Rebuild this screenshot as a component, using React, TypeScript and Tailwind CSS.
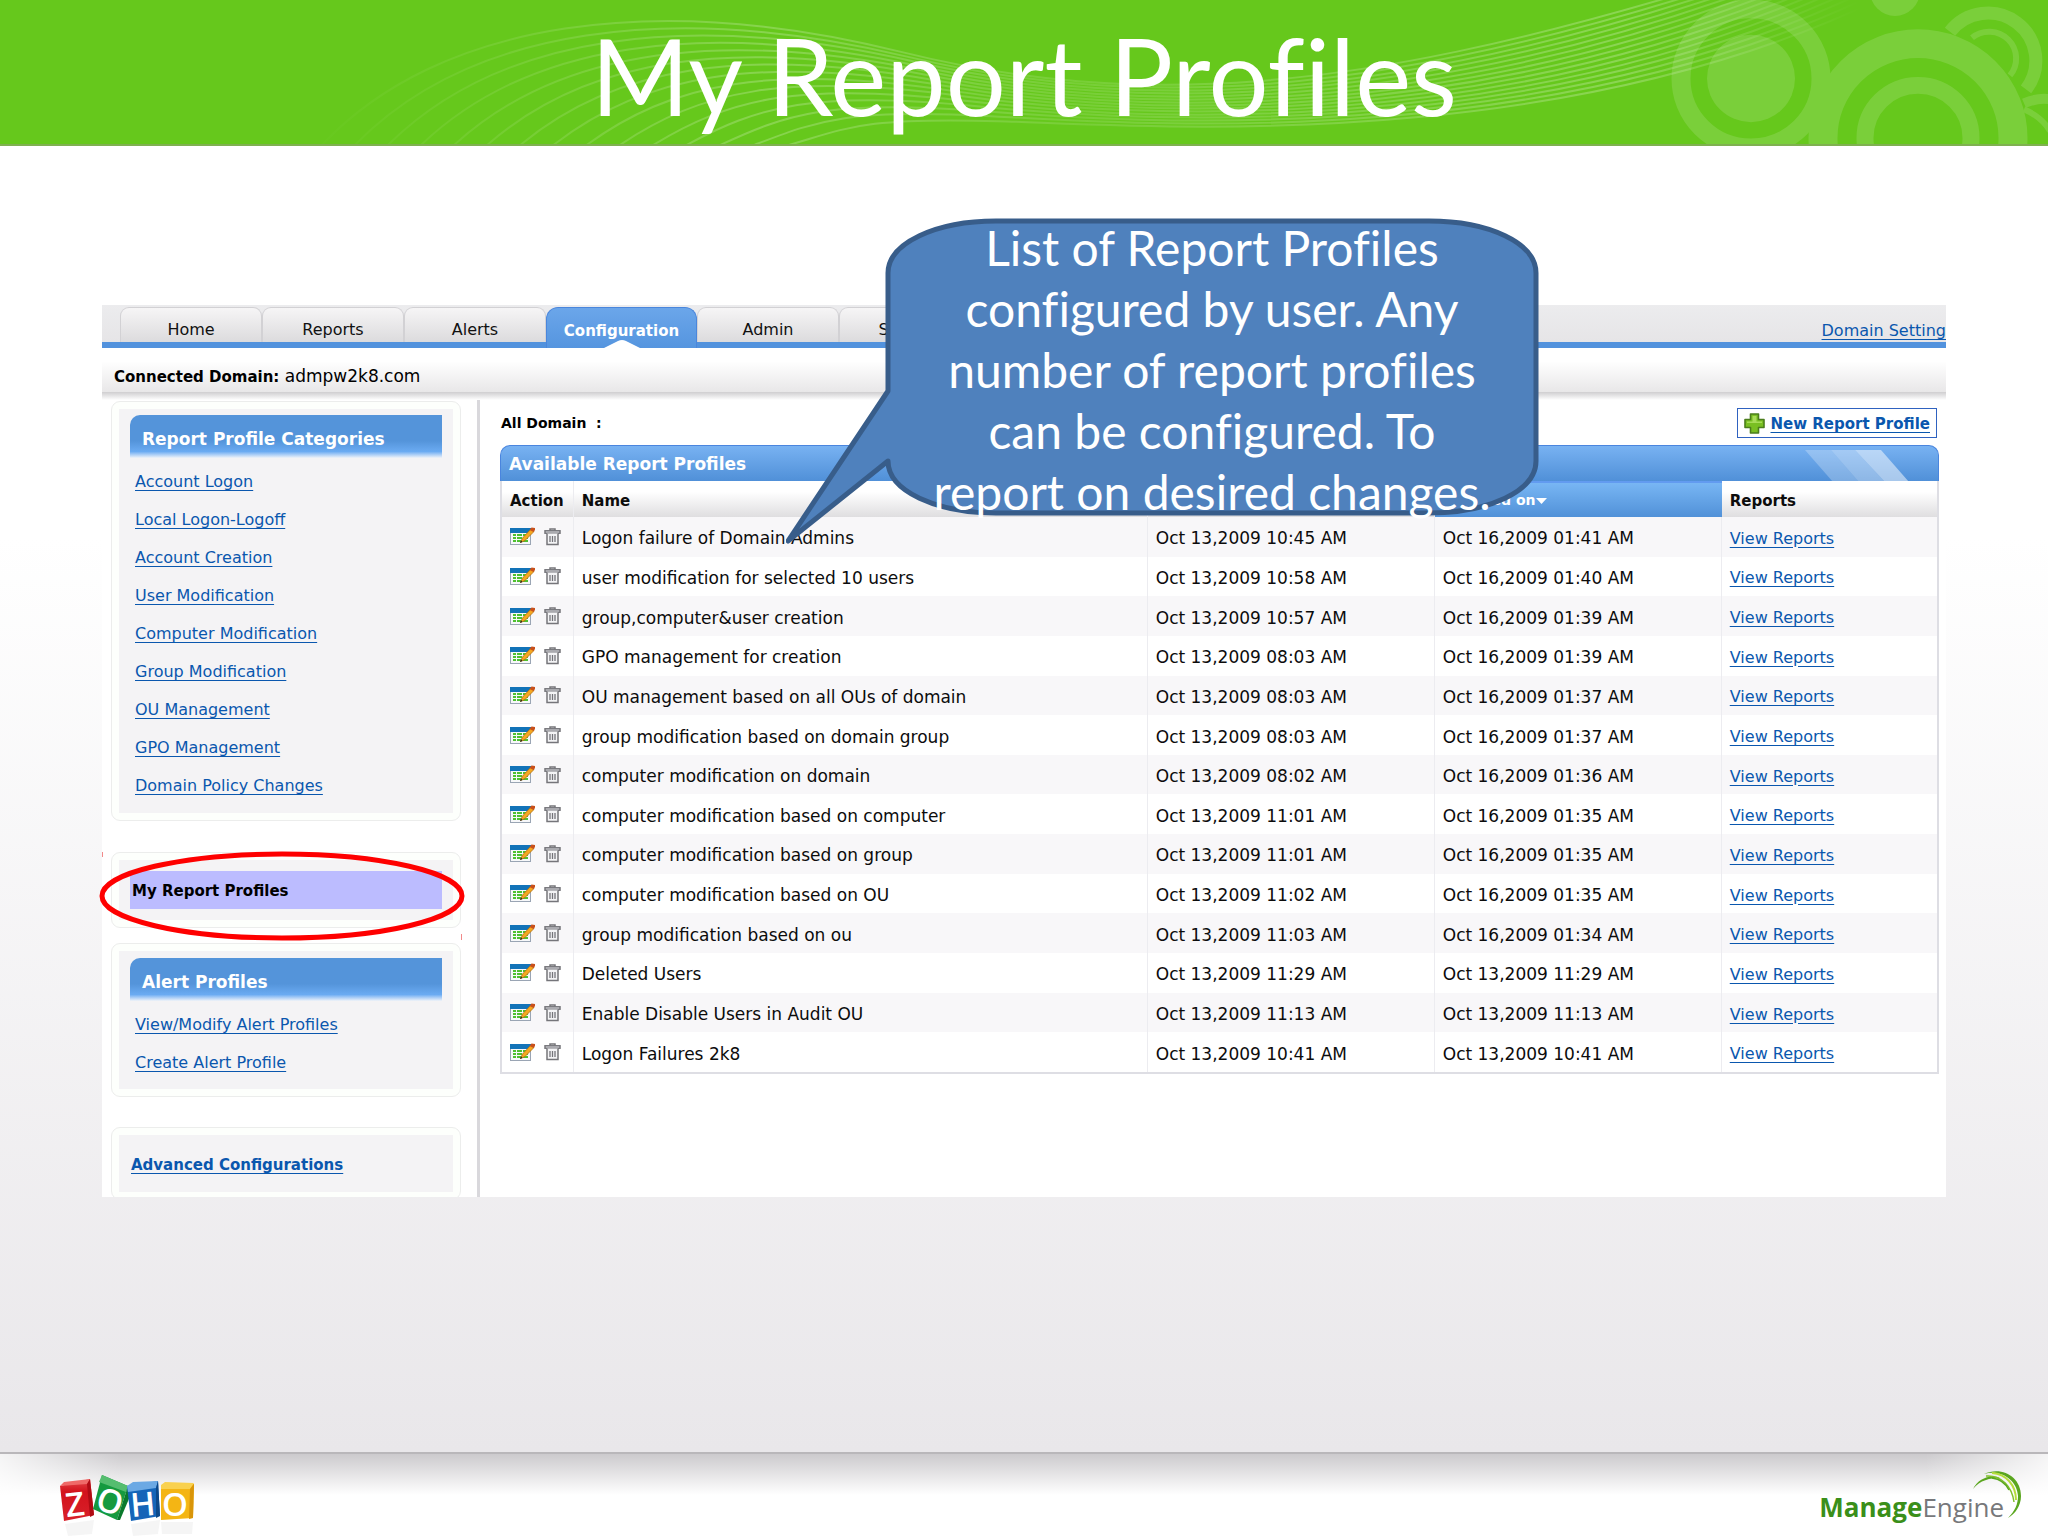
import React from "react";

const CATEGORY_LINKS = [
  "Account Logon", "Local Logon-Logoff", "Account Creation", "User Modification", "Computer Modification",
  "Group Modification", "OU Management", "GPO Management", "Domain Policy Changes",
];

const ROWS: [string, string, string][] = [
  ["Logon failure of Domain Admins", "Oct 13,2009 10:45 AM", "Oct 16,2009 01:41 AM"],
  ["user modification for selected 10 users", "Oct 13,2009 10:58 AM", "Oct 16,2009 01:40 AM"],
  ["group,computer&user creation", "Oct 13,2009 10:57 AM", "Oct 16,2009 01:39 AM"],
  ["GPO management for creation", "Oct 13,2009 08:03 AM", "Oct 16,2009 01:39 AM"],
  ["OU management based on all OUs of domain", "Oct 13,2009 08:03 AM", "Oct 16,2009 01:37 AM"],
  ["group modification based on domain group", "Oct 13,2009 08:03 AM", "Oct 16,2009 01:37 AM"],
  ["computer modification on domain", "Oct 13,2009 08:02 AM", "Oct 16,2009 01:36 AM"],
  ["computer modification based on computer", "Oct 13,2009 11:01 AM", "Oct 16,2009 01:35 AM"],
  ["computer modification based on group", "Oct 13,2009 11:01 AM", "Oct 16,2009 01:35 AM"],
  ["computer modification based on OU", "Oct 13,2009 11:02 AM", "Oct 16,2009 01:35 AM"],
  ["group modification based on ou", "Oct 13,2009 11:03 AM", "Oct 16,2009 01:34 AM"],
  ["Deleted Users", "Oct 13,2009 11:29 AM", "Oct 13,2009 11:29 AM"],
  ["Enable Disable Users in Audit OU", "Oct 13,2009 11:13 AM", "Oct 13,2009 11:13 AM"],
  ["Logon Failures 2k8", "Oct 13,2009 10:41 AM", "Oct 13,2009 10:41 AM"],
];

const LINES = Array.from({ length: 15 }, (_, i) => i);

function HeaderArt() {
  return (
    <svg className="absolute inset-0 h-full w-full" viewBox="0 0 2048 145" preserveAspectRatio="none" aria-hidden="true">
      <defs>
        <linearGradient id="wave" x1="300" y1="0" x2="1860" y2="0" gradientUnits="userSpaceOnUse">
          <stop offset="0" stopColor="#fff" stopOpacity="0" />
          <stop offset="0.3" stopColor="#fff" stopOpacity="0.22" />
          <stop offset="0.5" stopColor="#fff" stopOpacity="0.12" />
          <stop offset="0.85" stopColor="#fff" stopOpacity="0.24" />
          <stop offset="1" stopColor="#fff" stopOpacity="0" />
        </linearGradient>
      </defs>
      <g fill="none" stroke="url(#wave)" strokeWidth="2">
        {LINES.map((i) => (
          <path
            key={i}
            d={`M${320 + i * 33} 148 C${440 + i * 29} ${18 + i * 8}, ${660 + i * 14} ${-8 + i * 9}, ${900 + i * 7} ${52 + i * 5} S${1360 + i * 14} ${90 + i * 5}, ${1680 + i * 15} -6`}
          />
        ))}
      </g>
      <g opacity="0.13" fill="none" stroke="#fff">
        <circle cx="1751" cy="79" r="70" strokeWidth="19" />
        <circle cx="1751" cy="79" r="44" fill="#fff" stroke="none" />
        <circle cx="1895" cy="-9" r="25" fill="#fff" stroke="none" />
        <circle cx="1918" cy="139" r="95" strokeWidth="29" />
        <circle cx="1918" cy="139" r="53" strokeWidth="17" />
        <path d="M1950 32 A47 47 0 1 1 2026 90" strokeWidth="13" />
        <path d="M1972 38 A27 27 0 0 1 2010 76" strokeWidth="6" />
        <path d="M2024 104 Q2038 98 2050 100" strokeWidth="10" />
        <path d="M2024 110 Q2042 118 2050 132" strokeWidth="6" />
      </g>
    </svg>
  );
}

function EditIcon() {
  return (
    <svg className="block" width="25" height="19" viewBox="0 0 25 19" aria-hidden="true">
      <rect x="0.5" y="1.5" width="20" height="16" fill="#f7f8fa" stroke="#9aa5b4" />
      <rect x="0" y="1" width="21" height="5" fill="#1273b8" />
      <g fill="#4fc030">
        <rect x="3" y="7" width="3" height="2" /><rect x="7" y="7" width="5" height="2" /><rect x="13" y="7" width="5" height="2" />
        <rect x="3" y="10" width="3" height="2" /><rect x="7" y="10" width="5" height="2" /><rect x="13" y="10" width="5" height="2" />
        <rect x="3" y="13" width="3" height="2" /><rect x="7" y="13" width="5" height="2" /><rect x="13" y="13" width="5" height="2" />
      </g>
      <path d="M10.500 15.500 L12.500 11 L21 2 L24 4.500 L15 13.500 Z" fill="#f6a821" stroke="#b06f0c" strokeWidth="0.800" />
      <path d="M19.500 3 L21.500 0.500 L25 1 L25 3 L23.500 5 Z" fill="#c8501b" />
      <path d="M10 16 L11 13.500 L12.500 15 Z" fill="#222" />
    </svg>
  );
}

function TrashIcon() {
  return (
    <svg className="block" width="17" height="18" viewBox="0 0 17 18" fill="none" stroke="#75757a" strokeWidth="1.500" aria-hidden="true">
      <path d="M6 2.500 V1 H11 V2.500" />
      <rect x="1" y="2.800" width="15" height="2.400" fill="#ececef" />
      <path d="M3 5.500 V16.500 H14 V5.500" fill="#f4f4f6" />
      <path d="M6 8 V14 M8.500 8 V14 M11 8 V14" strokeWidth="1.300" />
    </svg>
  );
}

function PlusIcon() {
  return (
    <svg width="21" height="21" viewBox="0 0 21 21" aria-hidden="true">
      <path d="M6.500 1 H14.500 V6.500 H20 V14.500 H14.500 V20 H6.500 V14.500 H1 V6.500 H6.500 Z" fill="#79bf22" stroke="#4b7d1c" strokeWidth="1.600" strokeLinejoin="round" />
      <path d="M8.500 3 H12.500 V8.500 H18 V10 H3 V8.500 H8.500 Z" fill="#a8dc58" />
    </svg>
  );
}

function ZohoLogo() {
  return (
    <svg width="140" height="64" viewBox="0 0 140 64" role="img" aria-label="Zoho">
      <defs>
        <linearGradient id="zr" x1="0" y1="0" x2="0" y2="1"><stop offset="0" stopColor="#e2484b" /><stop offset="0.300" stopColor="#d3131c" /><stop offset="1" stopColor="#d8202a" /></linearGradient>
      </defs>
      <path d="M0 12 L30 5 L34 41 L4 47 Z" fill="url(#zr)" />
      <path d="M0 12 L4 8 L30 5 L27 10 Z" fill="#ef6a68" />
      <path d="M27 10 L30 5 L34 41 L30 43 Z" fill="#b00c14" />
      <path d="M42 1 L68 12 L57 46 L33 35 Z" fill="#159a3f" />
      <path d="M42 1 L68 12 L66 18 L39 8 Z" fill="#55bd6f" />
      <path d="M68 12 L71 20 L60 46 L57 46 Z" fill="#0a7a2c" />
      <path d="M67 12 L98 7 L100 42 L71 47 Z" fill="#1565b8" />
      <path d="M67 12 L73 8 L98 7 L96 14 L68 18 Z" fill="#6ba9e4" />
      <path d="M96 14 L98 7 L100 42 L96 44 Z" fill="#0c4889" />
      <path d="M101 11 L134 10 L133 44 L101 46 Z" fill="#f4b514" />
      <path d="M101 11 L105 8 L134 9 L130 15 L101 15 Z" fill="#f9d14f" />
      <path d="M130 15 L134 10 L133 44 L129 45 Z" fill="#d99509" />
      <g fill="#fff" fontFamily="Open Sans, sans-serif" fontWeight="600" fontSize="33" textAnchor="middle">
        <text x="15" y="42" transform="rotate(-6 15 30)">Z</text>
        <text x="50" y="39" transform="rotate(18 50 27)">O</text>
        <text x="83" y="42" transform="rotate(-5 83 31)">H</text>
        <text x="115" y="42">O</text>
      </g>
      <g fill="#aaa" fillOpacity="0.120">
        <path d="M5 50 L34 46 L32 60 L8 62 Z" /><path d="M71 50 L100 46 L98 60 L73 62 Z" /><path d="M101 48 H133 L132 60 H102 Z" />
      </g>
    </svg>
  );
}

function EngineLogo() {
  return (
    <div className="relative flex h-[52px] items-end pr-[18px] font-['Open_Sans',sans-serif] text-[26px] leading-[38px]" role="img" aria-label="ManageEngine">
      <span className="font-bold text-[#3a8f1a]">Manage</span>
      <span className="text-[#77787b]">Engine</span>
      <svg className="absolute -top-1 right-0" width="50" height="50" viewBox="0 0 50 50" fill="none" aria-hidden="true">
        <path d="M1 19 C6 9 18 4 28 8 C18 8 8 10 1 19 Z" fill="#5aa61f" />
        <path d="M12 4 C30 -4 49 7 49 26 C49 36 43 44 36 48 C43 41 46 34 46 26 C45 9 28 -1 12 4 Z" fill="#5aa61f" />
        <path d="M20 3 C34 4 44 15 44 30" stroke="#b6dc3c" strokeWidth="2" />
        <path d="M14 6 C30 5 40 17 42 32" stroke="#7fbf2a" strokeWidth="1.500" />
        <path d="M20 8 C28 9 34 14 37 20" stroke="#5aa61f" strokeWidth="1.500" />
      </svg>
    </div>
  );
}

function Tab({ children, current }: { children: React.ReactNode; current?: boolean }) {
  if (current)
    return (
      <button className="relative -mb-[6px] h-[41px] w-[151px] rounded-t-[12px] border border-b-0 border-[#4a86dc] bg-linear-to-b from-[#6ba6ea] to-[#5595df] pt-1.5 text-[15px] font-bold text-white">
        {children}
        <svg className="absolute bottom-0 left-[57px]" width="36" height="8" viewBox="0 0 36 8" aria-hidden="true">
          <path d="M0 8 L14 1 Q18 -1 22 1 L36 8 Z" fill="#fff" />
        </svg>
      </button>
    );
  return (
    <button className="h-[35px] w-[142px] rounded-t-[9px] border border-b-0 border-[#d2d1d4] bg-linear-to-b from-[#f6f5f6] to-[#dcdbdd] pt-2.5 text-[16px] text-[#111]">
      {children}
    </button>
  );
}

function Box({ children, className = "" }: { children: React.ReactNode; className?: string }) {
  return (
    <section className={"rounded-[9px] border border-[#ecedec] bg-[#fdfffc] p-[7px] " + className}>
      <div className="h-full bg-[#f4f3f5] px-[11px]">{children}</div>
    </section>
  );
}

function BoxTitle({ children }: { children: React.ReactNode }) {
  return (
    <h2 className="h-[43px] rounded-tl-[10px] bg-linear-to-b from-[#5494da] from-60% via-[#6babf2] via-85% to-[#f0f3f8] pl-3 text-[17px] leading-[48px] font-bold text-white">
      {children}
    </h2>
  );
}

function SideLink({ children }: { children: React.ReactNode }) {
  return (
    <li className="h-[38px] leading-[38px]">
      <a href="#" className="text-[16px] text-[#0a57ae] underline underline-offset-[3px]">{children}</a>
    </li>
  );
}

function Callout() {
  return (
    <div className="absolute top-[-88px] left-[684px] w-[756px]">
      <svg className="block" width="756" height="328" viewBox="0 0 756 328" aria-hidden="true">
        <path
          d="M102 56 C102 26 150 4 210 4 H643 C703 4 750 26 750 56 V244 C750 274 703 296 643 296 H210 C150 296 102 274 102 244 L2 324 L102 174 Z"
          fill="#4f81bd" stroke="#385d8a" strokeWidth="5" strokeLinejoin="round"
        />
      </svg>
      <p className="absolute top-0 left-[102px] w-[648px] text-center font-['Lato',sans-serif] text-[48px] leading-[61px] whitespace-nowrap text-white [font-variant-ligatures:none]">
        List of Report Profiles<br />configured by user. Any<br />number of report profiles<br />can be configured. To<br />report on desired changes.
      </p>
    </div>
  );
}

const CELL = "border-r border-[#ececf0] pl-2 text-left whitespace-nowrap";
const TEXT_CELL = "border-r border-[#ececf0] pt-[3px] pl-2 whitespace-nowrap";

export default function App() {
  return (
    <div className="flex min-h-screen flex-col bg-white font-['DejaVu_Sans',Verdana,sans-serif]">
      <header className="relative flex h-[146px] items-center justify-center overflow-hidden border-b-2 border-[#7fb050] bg-[#66c81c]">
        <HeaderArt />
        <h1 className="relative pt-1.5 font-['Lato',sans-serif] text-[106px] leading-[130px] text-white [font-variant-ligatures:none]">My Report Profiles</h1>
      </header>

      <main className="flex-1 bg-linear-to-b from-white from-30% to-[#e9e7ea] px-[102px] pt-[159px]">
        <div className="relative h-[892px] bg-white">
          <nav className="flex h-[43px] items-end justify-between border-b-[6px] border-[#5292dd] bg-linear-to-b from-[#ececee] to-[#e6e5e7]">
            <div className="flex items-end pl-[18px]">
              <Tab>Home</Tab>
              <Tab>Reports</Tab>
              <Tab>Alerts</Tab>
              <Tab current>Configuration</Tab>
              <Tab>Admin</Tab>
              <Tab>Support</Tab>
            </div>
            <a href="#" className="text-[16px] leading-[22px] text-[#0a57ae] underline underline-offset-[3px]">Domain Setting</a>
          </nav>
          <div className="h-[44px] bg-linear-to-b from-white from-30% to-[#e8e7e8] pl-3 text-[17px] leading-[56px]">
            <b className="text-[15px]">Connected Domain:</b> admpw2k8.com
          </div>
          <div className="h-[8px] bg-linear-to-b from-[#cfced0] to-white" />

          <div className="flex h-[797px] overflow-hidden">
            <aside className="w-[378px] shrink-0 border-r-[3px] border-[#d9d8dc] pt-px pl-[9px]">
              <Box className="mr-[16px] h-[420px]">
                <div className="pt-[6px]"><BoxTitle>Report Profile Categories</BoxTitle></div>
                <ul className="pt-[5px] pl-[5px]">
                  {CATEGORY_LINKS.map((t) => <SideLink key={t}>{t}</SideLink>)}
                </ul>
              </Box>
              <Box className="mt-[31px] mr-[16px] h-[76px]">
                <div className="pt-[11px]"><div className="h-[38px] bg-[#bcbcff] pl-0.5 text-[15px] leading-[40px] font-bold text-black">My Report Profiles</div></div>
              </Box>
              <Box className="mt-[15px] mr-[16px] h-[154px]">
                <div className="pt-[7px]"><BoxTitle>Alert Profiles</BoxTitle></div>
                <ul className="pt-[5px] pl-[5px]">
                  <SideLink>View/Modify Alert Profiles</SideLink>
                  <SideLink>Create Alert Profile</SideLink>
                </ul>
              </Box>
              <Box className="mt-[30px] mr-[16px] h-[73px]">
                <a href="#" className="pl-px text-[15px] leading-[60px] font-bold text-[#0a57ae] underline underline-offset-[3px]">Advanced Configurations</a>
              </Box>
            </aside>

            <section className="min-w-0 flex-1 pr-[7px] pl-[20px]">
              <div className="flex h-[45px] items-center justify-between pt-px">
                <h2 className="pl-px text-[14px] font-bold">All Domain&nbsp; :</h2>
                <button className="mr-0.5 flex h-[30px] items-center gap-1.5 border border-[#2f62c0] bg-white px-1.5 text-[15px] font-bold text-[#0a57ae]">
                  <PlusIcon /><span className="pt-0.5 underline underline-offset-[3px]">New Report Profile</span>
                </button>
              </div>
              <div className="flex h-[36px] justify-between overflow-hidden rounded-t-[10px] border border-b-0 border-[#4a85de] bg-linear-to-b from-[#78b2f2] to-[#5090d8] pl-2">
                <h2 className="text-[17px] leading-[36px] font-bold text-white">Available Report Profiles</h2>
                <svg className="mr-[25px]" width="108" height="36" viewBox="0 0 108 36" aria-hidden="true">
                  <path d="M0 4 H26 L54 36 H28 Z" fill="#fff" fillOpacity="0.250" />
                  <path d="M26 4 H50 L80 36 H54 Z" fill="#fff" fillOpacity="0.350" />
                  <path d="M50 4 H76 L104 36 H80 Z" fill="#fff" fillOpacity="0.500" />
                </svg>
              </div>
              <table className="h-[593px] w-full table-fixed border-separate border-spacing-0 border-2 border-t-0 border-[#dedee4] text-[17px] leading-6 text-[#0c0c0c]">
                <colgroup>
                  <col className="w-[5%]" /><col className="w-[40%]" /><col className="w-[20%]" /><col className="w-[20%]" /><col className="w-[15%]" />
                </colgroup>
                <thead>
                  <tr className="h-[36px] bg-linear-to-b from-white from-30% to-[#dfdee0] text-[15px]">
                    <th className={TEXT_CELL + " text-left"}>Action</th>
                    <th className={TEXT_CELL + " text-left"}>Name</th>
                    <th className={TEXT_CELL + " text-left"}>Created on</th>
                    <th className="border-t-2 border-[#629bf0] bg-linear-to-b from-[#78b6f4] to-[#5191d8] pl-2 text-left text-[14px] text-white">
                      Modified on
                      <svg className="ml-px inline" width="11" height="6" viewBox="0 0 11 6" aria-hidden="true"><path d="M0 0 H11 L5.500 6 Z" fill="#fff" /></svg>
                    </th>
                    <th className="pt-[3px] pl-2 text-left">Reports</th>
                  </tr>
                </thead>
                <tbody>
                  {ROWS.map(([name, created, modified]) => (
                    <tr key={name} className="odd:bg-[#f8f7f9]">
                      <td className={CELL}>
                        <div className="flex items-center gap-[9px]">
                          <button aria-label="Edit"><EditIcon /></button>
                          <button aria-label="Delete"><TrashIcon /></button>
                        </div>
                      </td>
                      <td className={TEXT_CELL}>{name}</td>
                      <td className={TEXT_CELL}>{created}</td>
                      <td className={TEXT_CELL}>{modified}</td>
                      <td className="pt-[3px] pl-2"><a href="#" className="text-[16px] text-[#0a57ae] underline underline-offset-[3px]">View Reports</a></td>
                    </tr>
                  ))}
                </tbody>
              </table>
            </section>
          </div>

          <svg className="absolute top-[545px] left-[-4px]" width="368" height="92" viewBox="0 0 368 92" aria-hidden="true">
            <ellipse cx="184" cy="46" rx="180" ry="42" fill="none" stroke="#fe0000" strokeWidth="5" />
            <path d="M4.500 2 V7 M363.500 84 V90" stroke="#f28a8a" strokeWidth="1" />
          </svg>
          <Callout />
        </div>
      </main>

      <footer className="flex h-[84px] items-start justify-between border-t-2 border-[#b9b7ba] bg-[linear-gradient(to_right,#ffffffcc,#ffffff00_6%,#ffffff00_94%,#ffffffcc),linear-gradient(to_bottom,#cccacd,#ffffff_50%)] pt-[20px] pr-[26px] pl-[60px]">
        <ZohoLogo />
        <EngineLogo />
      </footer>
    </div>
  );
}
